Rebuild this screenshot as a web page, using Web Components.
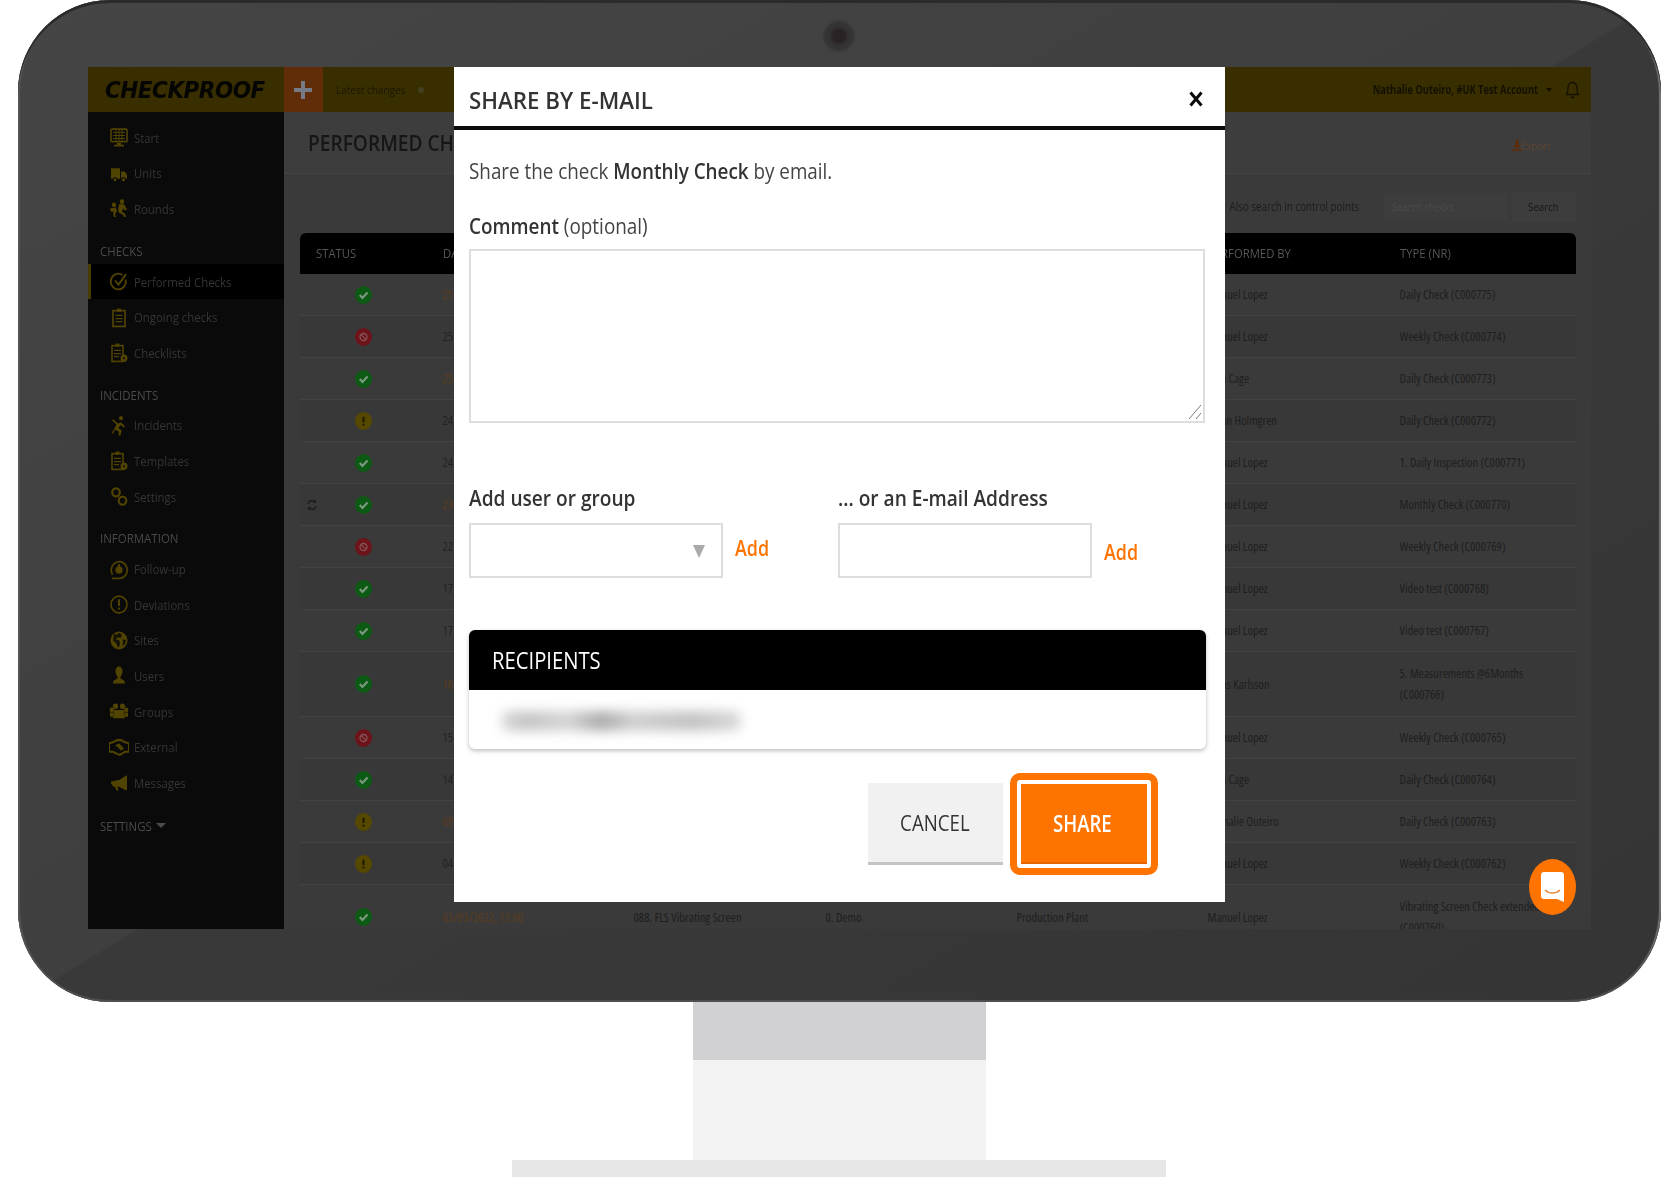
<!DOCTYPE html>
<html lang="en">
<head>
<meta charset="utf-8">
<title>Share by e-mail</title>
<style>
    html, body { margin: 0; padding: 0; background: #fff; height: 1177px; overflow: hidden; }
    body { font-family: "Open Sans", "Liberation Sans", sans-serif; }
</style>
</head>
<body>
<monitor-frame>
    <app-screen>
        <top-bar slot="top"></top-bar>
        <side-nav slot="side"></side-nav>
        <checks-page slot="main"></checks-page>
        <share-modal slot="overlay"></share-modal>
        <chat-launcher slot="overlay"></chat-launcher>
    </app-screen>
</monitor-frame>

<script>
// the reference is a screenshot squeezed in width, so text gets squeezed the same way
const SQ = `.sq { display: inline-block; white-space: nowrap; transform: scaleX(var(--sx, .9)); transform-origin: var(--ox, 0) 50%; }`;

const ICONS = {
    start: '<rect x="2" y="2" width="16" height="12" rx="1" fill="none" stroke="currentColor" stroke-width="1.6"/><path d="M4 5h12M4 8h12M4 11h12M7 3v10M10 3v10M13 3v10" stroke="currentColor" stroke-width="1"/><path d="M8 15h4v2h3v1.5H5V17h3z" fill="currentColor"/>',
    units: '<path d="M2 5h9v10H2z" fill="currentColor"/><path d="M12 8h3.500l2.500 3v4h-6z" fill="currentColor"/><circle cx="6" cy="16" r="2" fill="currentColor" stroke="#0a0a0a"/><circle cx="14.500" cy="16" r="2" fill="currentColor" stroke="#0a0a0a"/>',
    rounds: '<circle cx="13" cy="3.500" r="2.200" fill="currentColor"/><circle cx="5" cy="6.500" r="2.200" fill="currentColor"/><path d="M10 6h5l3 5-2 1-2-2-1 3 3 2 1 3h-2l-1-2-4-2-1-3zM1 10l6-1 1 4-2 2 1 3H5l-1-3 1-2H2z" fill="currentColor"/>',
    performed: '<path d="M16.500 8a7.500 7.500 0 1 1-3-4.200" fill="none" stroke="currentColor" stroke-width="1.800"/><path d="M6 9l3.500 4L17 3" fill="none" stroke="currentColor" stroke-width="1.800"/>',
    ongoing: '<rect x="4" y="3.500" width="12" height="15" fill="none" stroke="currentColor" stroke-width="1.700"/><rect x="8" y="1.500" width="4" height="3" fill="currentColor"/><path d="M6.500 8h7M6.500 11h7M6.500 14h7" stroke="currentColor" stroke-width="1.200"/>',
    list: '<rect x="3" y="3.500" width="11" height="15" fill="none" stroke="currentColor" stroke-width="1.600"/><rect x="6.500" y="1.500" width="4" height="3" fill="currentColor"/><path d="M5 8h7M5 11h7M5 14h5" stroke="currentColor" stroke-width="1.200"/><circle cx="15" cy="15.500" r="3.500" fill="currentColor"/><circle cx="15" cy="15.500" r="1" fill="#0a0a0a"/>',
    incident: '<circle cx="12" cy="3" r="2" fill="currentColor"/><path d="M4 4l5 4 3-1 4 4-1.500 1-3-2.500-2 3 3 2-1 5h-2l.5-3.600-4-2L4 18l-1-1 3-5 1.500-3L3 5z" fill="currentColor"/>',
    gears: '<circle cx="7" cy="6" r="3.800" fill="none" stroke="currentColor" stroke-width="2.200"/><circle cx="13.500" cy="14" r="3.800" fill="none" stroke="currentColor" stroke-width="2.200"/>',
    follow: '<path d="M3.500 15A8 8 0 1 1 9 18.500H3" fill="none" stroke="currentColor" stroke-width="1.600"/><circle cx="10" cy="10.500" r="3.600" fill="currentColor"/><rect x="9" y="5" width="2" height="3" fill="currentColor"/>',
    deviation: '<circle cx="10" cy="10" r="8" fill="none" stroke="currentColor" stroke-width="1.600"/><path d="M10 5v6.500" stroke="currentColor" stroke-width="2"/><circle cx="10" cy="14" r="1.100" fill="currentColor"/>',
    globe: '<circle cx="10" cy="10" r="8.500" fill="currentColor"/><path d="M5 3.500l3 1 2-2 3 2-1.500 3-3-.5L7 9l3.500 1 .5 4-2 3-1.500-4L4 10z" fill="#0a0a0a" opacity=".85"/><path d="M14 9l3 .5-1 4-2.500 1.500z" fill="#0a0a0a" opacity=".85"/>',
    user: '<path d="M10 1.500c2.400 0 3.500 2 3.500 4.500 0 2.500-1 4-2 5v2c2 .6 4.500 1.400 4.500 4.500H4c0-3.100 2.500-3.900 4.500-4.500v-2c-1-1-2-2.500-2-5 0-2.500 1.100-4.500 3.500-4.500z" fill="currentColor"/>',
    groups: '<circle cx="6.500" cy="5" r="2.600" fill="currentColor"/><circle cx="13.500" cy="5" r="2.600" fill="currentColor"/><circle cx="2.800" cy="8.500" r="2.200" fill="currentColor"/><circle cx="17.200" cy="8.500" r="2.200" fill="currentColor"/><path d="M5 8.500h10l1 8H4z" fill="currentColor"/><path d="M1 11h3.500l-.5 4H1zM15.500 11H19v4h-3z" fill="currentColor"/>',
    external: '<path d="M0 6l4-1 4-2h4l4 2 4 1v8l-4 0-5 3-2-.5-5-2.500H0z" fill="none" stroke="currentColor" stroke-width="2"/><path d="M6 8l4-2 5 5-3 2-3-3z" fill="currentColor"/>',
    megaphone: '<path d="M18 3v14l-1 .5-7-3.500H6l-1 .5L2 11V9l8-1.500L17 3.500z" fill="currentColor"/><path d="M6 14l1.500 3.500h2L8.500 14z" fill="currentColor"/>'
};

class MonitorFrame extends HTMLElement {
    constructor() {
        super();
        this.attachShadow({ mode: 'open' });
    }

    connectedCallback() {
        this.shadowRoot.innerHTML = `
            <style>
                :host { display: flex; flex-direction: column; align-items: center; width: 1678px; }
                .bezel {
                    box-sizing: border-box;
                    width: 1643px;
                    height: 1002px;
                    padding: 0 70px;
                    border-radius: 92px;
                    background: linear-gradient(to bottom right, #454545 0%, #3f3f3f 49.9%, #393939 50.1%, #353535 100%);
                    box-shadow: inset 0 3px 0 #2b2b2b, inset 0 -2px 1px #505050, inset 2px 0 1px #565656, inset -2px 0 1px #757575;
                }
                .lens { height: 67px; display: flex; align-items: center; justify-content: center; }
                .lens i {
                    width: 32px;
                    height: 32px;
                    margin-top: 4px;
                    border-radius: 50%;
                    background: radial-gradient(circle, #2a2326 0 7px, #333 9px 14px, #3f3f3f 16px);
                    filter: blur(1px);
                }
                .neck { width: 293px; height: 58px; background: #d1d1d3; }
                .post { width: 293px; height: 100px; background: #f3f3f4; }
                .foot { width: 654px; height: 17px; background: #e6e6e6; }
            </style>
            <div class="bezel">
                <div class="lens"><i></i></div>
                <slot></slot>
            </div>
            <div class="neck"></div>
            <div class="post"></div>
            <div class="foot"></div>
        `;
    }
}

class AppScreen extends HTMLElement {
    constructor() {
        super();
        this.attachShadow({ mode: 'open' });
    }

    connectedCallback() {
        this.shadowRoot.innerHTML = `
            <style>
                :host {
                    display: grid;
                    grid-template-columns: 196px 1fr;
                    grid-template-rows: 45px 817px;
                    position: relative;
                    width: 1503px;
                    height: 862px;
                    overflow: hidden;
                    background: #3a3a3a;
                }
                .top { grid-column: 1 / 3; display: block; }
            </style>
            <div class="top"><slot name="top"></slot></div>
            <slot name="side"></slot>
            <slot name="main"></slot>
            <slot name="overlay"></slot>
        `;
    }
}

class TopBar extends HTMLElement {
    constructor() {
        super();
        this.attachShadow({ mode: 'open' });
    }

    connectedCallback() {
        this.shadowRoot.innerHTML = `
            <style>
                ${SQ}
                :host {
                    display: flex;
                    align-items: center;
                    height: 45px;
                    background: #382e00;
                    color: #1c1700;
                }
                .logo { width: 196px; box-sizing: border-box; padding-left: 17px; }
                .logo span {
                    font: italic 700 23px "DejaVu Sans", "Liberation Sans", sans-serif;
                    letter-spacing: -.5px;
                    color: #050504;
                }
                .plus {
                    width: 39px;
                    height: 45px;
                    background: #602d08;
                    display: flex;
                    align-items: center;
                    justify-content: center;
                }
                .latest { margin-left: 13px; font-size: 11.500px; }
                .dot { width: 6px; height: 6px; margin-left: 3px; border-radius: 50%; background: #45401f; }
                .user { margin-left: auto; font-size: 11.500px; font-weight: 700; color: #141100; }
                .caret {
                    width: 0; height: 0; margin: 0 14px 0 7px;
                    border: 3.500px solid transparent; border-top: 4px solid #141100; border-bottom: 0;
                }
                .bell { margin-right: 12px; display: block; }
            </style>
            <div class="logo"><span class="sq" style="--sx:.935">CHECKPROOF</span></div>
            <div class="plus">
                <svg width="18" height="20" viewBox="0 0 18 20"><path d="M7 1h4v7h7v4h-7v7H7v-7H0V8h7z" fill="#747b87"/></svg>
            </div>
            <span class="latest sq" style="--sx:.87">Latest changes</span>
            <span class="dot"></span>
            <span class="user sq" style="--sx:.81;--ox:100%">Nathalie Outeiro, #UK Test Account</span>
            <span class="caret"></span>
            <svg class="bell" width="13" height="18" viewBox="0 0 13 18"><path d="M6.500 1.500c-3 0-4.500 2.500-4.500 5.500 0 3-.5 5-1.500 6.500h12c-1-1.500-1.500-3.500-1.500-6.500s-1.500-5.500-4.500-5.500z" fill="none" stroke="#141100" stroke-width="1.300"/><path d="M4.500 15.500a2 2 0 0 0 4 0z" fill="#141100"/></svg>
        `;
    }
}

class NavItem extends HTMLElement {
    constructor() {
        super();
        this.attachShadow({ mode: 'open' });
    }

    connectedCallback() {
        const icon = ICONS[this.getAttribute('icon')] || '';
        this.shadowRoot.innerHTML = `
            <style>
                ${SQ}
                :host {
                    display: flex;
                    align-items: center;
                    height: 35.600px;
                    padding-left: 21px;
                    font-size: 13px;
                    color: #353535;
                }
                :host([active]) { background: #000; box-shadow: inset 3px 0 0 #4a3c00; }
                svg { width: 20px; height: 21px; margin-right: 5px; color: #514300; flex: none; }
            </style>
            <svg viewBox="0 0 20 20" preserveAspectRatio="none">${icon}</svg>
            <span class="sq" style="--sx:.875"><slot></slot></span>
        `;
    }
}

class NavHeading extends HTMLElement {
    constructor() {
        super();
        this.attachShadow({ mode: 'open' });
    }

    connectedCallback() {
        const caret = this.hasAttribute('caret');
        this.shadowRoot.innerHTML = `
            <style>
                ${SQ}
                :host {
                    display: flex;
                    align-items: center;
                    height: 26px;
                    padding: 11px 0 0 12px;
                    font-size: 13.500px;
                    color: #4a4a4a;
                }
                i { width: 0; height: 0; margin-left: -4px; border: 5px solid transparent; border-top: 5px solid #4a4a4a; border-bottom: 0; }
                :host([caret]) { margin-top: 1px; }
            </style>
            <span class="sq" style="--sx:.85"><slot></slot></span>
            ${caret ? '<i></i>' : ''}
        `;
    }
}

class SideNav extends HTMLElement {
    constructor() {
        super();
        this.attachShadow({ mode: 'open' });
    }

    connectedCallback() {
        const groups = [
            [null, [['start', 'Start'], ['units', 'Units'], ['rounds', 'Rounds']]],
            ['CHECKS', [['performed', 'Performed Checks', true], ['ongoing', 'Ongoing checks'], ['list', 'Checklists']]],
            ['INCIDENTS', [['incident', 'Incidents'], ['list', 'Templates'], ['gears', 'Settings']]],
            ['INFORMATION', [['follow', 'Follow-up'], ['deviation', 'Deviations'], ['globe', 'Sites'], ['user', 'Users'], ['groups', 'Groups'], ['external', 'External'], ['megaphone', 'Messages']]]
        ];
        const html = groups.map(([title, items]) => `
            ${title ? `<nav-heading>${title}</nav-heading>` : ''}
            ${items.map(([icon, label, active]) => `<nav-item icon="${icon}"${active ? ' active' : ''}>${label}</nav-item>`).join('')}
        `).join('');
        this.shadowRoot.innerHTML = `
            <style>
                :host { display: block; background: #0a0a0a; padding-top: 8px; box-sizing: border-box; height: 817px; }
            </style>
            ${html}
            <nav-heading caret>SETTINGS</nav-heading>
        `;
    }
}

class StatusDot extends HTMLElement {
    constructor() {
        super();
        this.attachShadow({ mode: 'open' });
    }

    connectedCallback() {
        const kinds = {
            ok: ['#0d5a15', '<path d="M4.500 8.500l2.500 2.700 4.800-5" fill="none" stroke="#7d9a80" stroke-width="2"/>'],
            stop: ['#6e1319', '<circle cx="8" cy="8.500" r="3.300" fill="none" stroke="#86565a" stroke-width="1.200"/><path d="M5.800 6.200l4.400 4.600" stroke="#86565a" stroke-width="1"/>'],
            warn: ['#574800', '<path d="M8 4.500v5" stroke="#201a00" stroke-width="2"/><circle cx="8" cy="12" r="1.100" fill="#201a00"/>']
        };
        const [fill, inner] = kinds[this.getAttribute('kind')];
        this.shadowRoot.innerHTML = `
            <style>:host { display: block; width: 17px; height: 18px; } svg { display: block; }</style>
            <svg width="17" height="18" viewBox="0 0 16 17"><ellipse cx="8" cy="8.500" rx="8" ry="8.500" fill="${fill}"/>${inner}</svg>
        `;
    }
}

class CheckRow extends HTMLElement {
    constructor() {
        super();
        this.attachShadow({ mode: 'open' });
    }

    connectedCallback() {
        const a = (n) => this.getAttribute(n) || '';
        const sync = this.hasAttribute('sync') ? '<svg class="sync" width="10" height="12" viewBox="0 0 10 12"><path d="M1 5a4 4 0 0 1 7-2M9 7a4 4 0 0 1-7 2" fill="none" stroke="#1c1c1c" stroke-width="1.400"/><path d="M9 .500v3.500H5.500zM1 11.500V8h3.500z" fill="#1c1c1c"/></svg>' : '';
        this.shadowRoot.innerHTML = `
            <style>
                :host {
                    display: grid;
                    grid-template-columns: 143px 191px 192px 191px 191px 192px 176px;
                    align-items: center;
                    min-height: 41px;
                    border-bottom: 1px solid #434343;
                    font-size: 12.500px;
                    font-stretch: 80%;
                    line-height: 21px;
                    color: #1e1e1e;
                }
                :host([odd]) { background: #383838; }
                :host([tall]) { min-height: 64px; }
                .st { position: relative; display: flex; justify-content: center; width: 127px; }
                .sync { position: absolute; left: 7px; top: 3px; }
                .date { color: ${this.hasAttribute('late') ? '#5b3d1e' : '#232323'}; }
                .type { padding-right: 25px; }
            </style>
            <div class="st">${sync}<status-dot kind="${a('kind')}"></status-dot></div>
            <div class="date">${a('date')}</div>
            <div>${a('unit')}</div>
            <div>${a('site')}</div>
            <div>${a('place')}</div>
            <div>${a('by')}</div>
            <div class="type">${a('type')}</div>
        `;
    }
}

class ChecksPage extends HTMLElement {
    constructor() {
        super();
        this.attachShadow({ mode: 'open' });
    }

    connectedCallback() {
        // under the modal only the first digits of a date can be seen
        const rows = [
            ['ok', '25', 'Manuel Lopez', 'Daily Check (C000775)', 1],
            ['stop', '25', 'Manuel Lopez', 'Weekly Check (C000774)', 0],
            ['ok', '25', 'Tom Cage', 'Daily Check (C000773)', 1],
            ['warn', '24', 'Johan Holmgren', 'Daily Check (C000772)', 0],
            ['ok', '24', 'Manuel Lopez', '1. Daily Inspection (C000771)', 0],
            ['ok', '23', 'Manuel Lopez', 'Monthly Check (C000770)', 1, 1],
            ['stop', '22', 'Manuel Lopez', 'Weekly Check (C000769)', 0],
            ['ok', '17', 'Manuel Lopez', 'Video test (C000768)', 0],
            ['ok', '17', 'Manuel Lopez', 'Video test (C000767)', 0],
            ['ok', '16', 'Jonas Karlsson', '5. Measurements @6Months (C000766)', 1],
            ['stop', '15', 'Manuel Lopez', 'Weekly Check (C000765)', 0],
            ['ok', '14', 'Tom Cage', 'Daily Check (C000764)', 0],
            ['warn', '09', 'Nathalie Outeiro', 'Daily Check (C000763)', 1],
            ['warn', '04', 'Manuel Lopez', 'Weekly Check (C000762)', 0],
            ['ok', '03/03/2022, 13:00', 'Manuel Lopez', 'Vibrating Screen Check extended (C000760)', 1]
        ];
        const html = rows.map(([kind, date, by, type, late, sync], i) => {
            const last = i === rows.length - 1;
            return `<check-row kind="${kind}" date="${date}" by="${by}" type="${type}"
                ${late ? 'late' : ''} ${sync ? 'sync' : ''} ${i % 2 ? 'odd' : ''} ${i === 9 || last ? 'tall' : ''}
                ${last ? 'unit="088. FLS Vibrating Screen" site="0. Demo" place="Production Plant"' : ''}></check-row>`;
        }).join('');
        const cols = ['STATUS', 'DATE', 'UNIT', 'SITE', 'PLACE', 'PERFORMED BY', 'TYPE (NR)'];
        this.shadowRoot.innerHTML = `
            <style>
                ${SQ}
                :host { display: block; overflow: hidden; }
                .head {
                    display: flex;
                    align-items: center;
                    justify-content: space-between;
                    height: 62px;
                    box-sizing: border-box;
                    padding: 0 39px 2px 24px;
                    border-bottom: 1px solid #444;
                    background: #3d3d3d;
                }
                h1 { margin: 0; font-size: 22px; font-weight: 600; color: #161616; }
                .export { font-size: 11.500px; color: #5f4530; display: flex; align-items: center; padding-top: 8px; }
                .export svg { margin-right: -6px; }
                .tools {
                    display: flex;
                    align-items: center;
                    justify-content: flex-end;
                    box-sizing: border-box;
                    height: 59px;
                    padding: 6px 15px 0 0;
                    font-size: 12px;
                    color: #1c1c1c;
                }
                .field {
                    width: 123px;
                    height: 28px;
                    box-sizing: border-box;
                    margin: 0 5px 0 24px;
                    padding-left: 8px;
                    line-height: 28px;
                    background: #3d3d3d;
                    color: #4c4c4c;
                    font-size: 11px;
                }
                .go {
                    width: 64px;
                    height: 30px;
                    line-height: 30px;
                    text-align: center;
                    background: #3d3d3d;
                    color: #161616;
                    font-size: 11px;
                }
                .table { margin: 0 15px 0 16px; }
                .cols {
                    display: grid;
                    grid-template-columns: 143px 191px 192px 191px 191px 192px 176px;
                    align-items: center;
                    box-sizing: border-box;
                    height: 41px;
                    padding-bottom: 2px;
                    background: #000;
                    border-radius: 6px 6px 0 0;
                    font-size: 13px;
                    color: #555;
                }
                .cols div:first-child { padding-left: 16px; }
            </style>
            <div class="head">
                <h1 class="sq" style="--sx:.87">PERFORMED CHECKS</h1>
                <div class="export">
                    <svg width="10" height="11" viewBox="0 0 10 11"><path d="M3.500 0h3v5H9L5 9 1 5h2.500zM0 9.500h10V11H0z" fill="#5e2c06"/></svg>
                    <span class="sq" style="--sx:.87;--ox:100%">Export</span>
                </div>
            </div>
            <div class="tools">
                <span class="sq" style="--sx:.82;--ox:100%">Also search in control points</span>
                <div class="field"><span class="sq" style="--sx:.86">Search checks</span></div>
                <div class="go"><span class="sq" style="--sx:.88;--ox:50%">Search</span></div>
            </div>
            <div class="table">
                <div class="cols">
                    ${cols.map((c) => `<div><span class="sq" style="--sx:.87">${c}</span></div>`).join('')}
                </div>
                ${html}
            </div>
        `;
    }
}

class ShareModal extends HTMLElement {
    constructor() {
        super();
        this.attachShadow({ mode: 'open' });
    }

    connectedCallback() {
        this.shadowRoot.innerHTML = `
            <style>
                ${SQ}
                :host {
                    display: block;
                    position: absolute;
                    left: 366px;
                    top: 0;
                    width: 771px;
                    height: 835px;
                    box-sizing: border-box;
                    background: #fff;
                    color: #333;
                    font-size: 21px;
                }
                header {
                    display: flex;
                    align-items: center;
                    justify-content: space-between;
                    height: 54px;
                    padding: 5px 22px 0 15px;
                    border-bottom: 4px solid #0b0b0b;
                }
                h2 { margin: 0; font-size: 24px; font-weight: 600; color: #333; }
                .body { padding: 0 20px 0 15px; }
                .intro { margin-top: 28px; height: 27px; line-height: 27px; color: #444; }
                b { font-weight: 600; color: #333; }
                label { display: block; font-weight: 600; line-height: 26px; }
                label span span { font-weight: 400; color: #444; }
                .comment { margin-top: 28px; }
                .area { position: relative; width: 736px; height: 174px; margin-top: 10px; }
                .area svg { position: absolute; right: 3px; bottom: 3px; }
                textarea {
                    display: block;
                    box-sizing: border-box;
                    width: 100%;
                    height: 100%;
                    border: 2px solid #ddd;
                    background: #fff;
                    outline: none;
                    resize: none;
                }
                .pickers { display: grid; grid-template-columns: 369px 1fr; margin-top: 62px; }
                .control { display: flex; align-items: center; margin-top: 12px; }
                .box {
                    position: relative;
                    box-sizing: border-box;
                    width: 254px;
                    height: 55px;
                    border: 2px solid #ddd;
                    background: #fff;
                }
                .box select, .box input {
                    display: block;
                    width: 100%;
                    height: 100%;
                    box-sizing: border-box;
                    border: 0;
                    padding: 0 10px;
                    background: transparent;
                    appearance: none;
                    outline: none;
                }
                .box i {
                    position: absolute;
                    right: 16px;
                    top: 20px;
                    width: 0;
                    height: 0;
                    border: 6px solid transparent;
                    border-top: 13px solid #aaa;
                    border-bottom: 0;
                }
                .add { margin-left: 12px; color: #ff7300; font-weight: 600; }
                .add.up { padding-bottom: 5px; }
                .add.down { padding-top: 3px; }
                .panel {
                    margin-top: 52px;
                    width: 737px;
                    border-radius: 6px;
                    background: #fff;
                    box-shadow: 0 2px 4px rgba(0, 0, 0, .25);
                }
                .panel h3 {
                    margin: 0;
                    height: 60px;
                    box-sizing: border-box;
                    padding-left: 23px;
                    line-height: 60px;
                    background: #000;
                    border-radius: 6px 6px 0 0;
                    color: #fff;
                    font-size: 23px;
                    font-weight: 400;
                }
                .rec { height: 59px; display: flex; align-items: center; padding: 2px 0 0 32px; box-sizing: border-box; }
                .smear {
                    width: 240px;
                    height: 20px;
                    border-radius: 6px;
                    background: linear-gradient(90deg, #dcdcdc 0, #c4c4c4 10%, #d4d4d4 28%, #ababab 42%, #d0d0d0 55%, #c2c2c2 80%, #dadada 100%);
                    filter: blur(6px);
                }
                footer { display: flex; align-items: center; justify-content: flex-end; margin: 24px 67px 0 0; gap: 7px; }
                button {
                    font: inherit;
                    font-size: 22.500px;
                    width: 135px;
                    height: 82px;
                    box-sizing: border-box;
                    border: 0;
                    border-bottom: 3px solid #c4c4c4;
                    background: #f1f1f1;
                    color: #333;
                    padding: 0;
                }
                button .sq { --ox: 50%; }
                .ring {
                    box-sizing: border-box;
                    width: 148px;
                    height: 102px;
                    padding: 7px;
                    border-radius: 10px;
                    background: #ff7300;
                }
                .ring div { box-sizing: border-box; height: 88px; padding: 4px; background: #fff; border-radius: 3px; }
                .ring button {
                    display: block;
                    width: 100%;
                    height: 80px;
                    padding-right: 3px;
                    background: #ff7300;
                    border-bottom: 2px solid #e66400;
                    color: #fff;
                    font-size: 23px;
                    font-weight: 600;
                }
                .close { display: block; }
            </style>
            <header>
                <h2 class="sq" style="--sx:.93">SHARE BY E-MAIL</h2>
                <svg class="close" width="14" height="16" viewBox="0 0 14 16"><path d="M1.500 1.500l11 13M12.500 1.500l-11 13" stroke="#0b0b0b" stroke-width="3"/></svg>
            </header>
            <div class="body">
                <div class="intro"><span class="sq" style="--sx:.897">Share the check <b>Monthly Check</b> by email.</span></div>
                <label class="comment"><span class="sq" style="--sx:.9">Comment <span>(optional)</span></span></label>
                <div class="area">
                    <textarea></textarea>
                    <svg width="14" height="16" viewBox="0 0 14 16"><path d="M1 15L13 1M8 15l5-6" fill="none" stroke="#777" stroke-width="1"/></svg>
                </div>
                <div class="pickers">
                    <div>
                        <label><span class="sq" style="--sx:.91">Add user or group</span></label>
                        <div class="control">
                            <div class="box"><select></select><i></i></div>
                            <span class="add up sq" style="--sx:.85">Add</span>
                        </div>
                    </div>
                    <div>
                        <label><span class="sq" style="--sx:.91">... or an E-mail Address</span></label>
                        <div class="control">
                            <div class="box"><input type="text"></div>
                            <span class="add down sq" style="--sx:.85">Add</span>
                        </div>
                    </div>
                </div>
                <section class="panel">
                    <h3><span class="sq" style="--sx:.88">RECIPIENTS</span></h3>
                    <div class="rec"><div class="smear"></div></div>
                </section>
            </div>
            <footer>
                <button><span class="sq" style="--sx:.83">CANCEL</span></button>
                <div class="ring"><div><button><span class="sq" style="--sx:.81">SHARE</span></button></div></div>
            </footer>
        `;
    }
}

class ChatLauncher extends HTMLElement {
    constructor() {
        super();
        this.attachShadow({ mode: 'open' });
    }

    connectedCallback() {
        this.shadowRoot.innerHTML = `
            <style>
                :host {
                    position: absolute;
                    left: 1441px;
                    top: 792px;
                    width: 47px;
                    height: 56px;
                    border-radius: 50%;
                    background: #ff7300;
                    display: flex;
                    align-items: center;
                    justify-content: center;
                }
            </style>
            <svg width="23" height="30" viewBox="0 0 23 30">
                <path d="M3 0h17a3 3 0 0 1 3 3v27l-7-3H3a3 3 0 0 1-3-3V3a3 3 0 0 1 3-3z" fill="#fff"/>
                <path d="M4 18c4 4 11 4 15 0" fill="none" stroke="#e98a3c" stroke-width="1.500"/>
            </svg>
        `;
    }
}

customElements.define('monitor-frame', MonitorFrame);
customElements.define('app-screen', AppScreen);
customElements.define('top-bar', TopBar);
customElements.define('nav-item', NavItem);
customElements.define('nav-heading', NavHeading);
customElements.define('side-nav', SideNav);
customElements.define('status-dot', StatusDot);
customElements.define('check-row', CheckRow);
customElements.define('checks-page', ChecksPage);
customElements.define('share-modal', ShareModal);
customElements.define('chat-launcher', ChatLauncher);
</script>
</body>
</html>
